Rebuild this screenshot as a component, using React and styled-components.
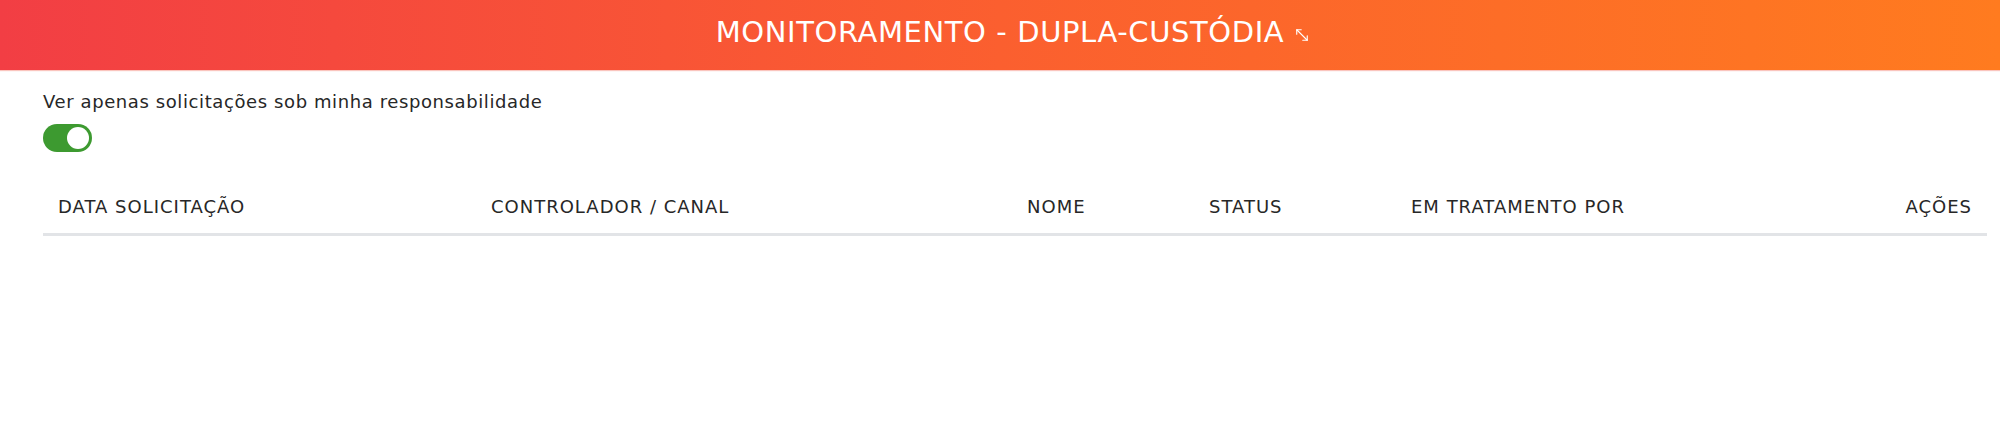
import React, { useState } from "react";
import styled, { createGlobalStyle } from "styled-components";
import { MoveDiagonal2 } from "lucide-react";

const GlobalStyle = createGlobalStyle`
  body {
    margin: 0;
    background: #fff;
    font-family: "DejaVu Sans", "Open Sans", sans-serif;
    color: #272727;
  }
`;

const Header = styled.header`
  display: grid;
  grid-template-columns: 1fr auto 1fr;
  align-items: center;
  height: 70px;
  background: linear-gradient(to right, #f23e44, #fb5f2f 50%, #ff7b1f);
  box-shadow: 0 1px 1px rgba(242, 90, 70, 0.35);
  color: #fff;
`;

const Title = styled.h1`
  grid-column: 2;
  margin: 0 0 6px;
  font-size: 29px;
  font-weight: 400;
  letter-spacing: 0.6px;
  white-space: nowrap;
`;

const ExpandButton = styled.button`
  grid-column: 3;
  justify-self: start;
  display: flex;
  align-items: center;
  margin: 0 0 0 9px;
  padding: 0;
  border: 0;
  background: none;
  color: #fff;
  cursor: pointer;
`;

const Content = styled.main`
  padding: 22px 13px 0 43px;
`;

const FilterLabel = styled.div`
  font-size: 18px;
  line-height: 20px;
  letter-spacing: 0.6px;
`;

const Switch = styled.button`
  display: flex;
  align-items: center;
  justify-content: ${(p) => (p.$on ? "flex-end" : "flex-start")};
  width: 49px;
  height: 28px;
  margin-top: 12px;
  padding: 0 3px;
  border: 0;
  border-radius: 14px;
  background: ${(p) => (p.$on ? "#3d9a30" : "#bdbdbd")};
  cursor: pointer;
`;

const Knob = styled.span`
  width: 22px;
  height: 22px;
  border-radius: 50%;
  background: #fff;
`;

const TableHead = styled.div`
  display: grid;
  grid-template-columns: 433px 536px 182px 202px 1fr auto;
  margin-top: 31px;
  border-bottom: 3px solid #e2e4e7;
`;

const HeadCell = styled.div`
  padding: 14px 15px 16px;
  font-size: 18px;
  line-height: 20px;
  letter-spacing: 1px;
  text-transform: uppercase;
  text-align: ${(p) => p.$align || "left"};
  white-space: nowrap;
`;

const columns = [
  { key: "data", label: "Data Solicitação" },
  { key: "controlador", label: "Controlador / Canal" },
  { key: "nome", label: "Nome" },
  { key: "status", label: "Status" },
  { key: "tratamento", label: "Em Tratamento Por" },
  { key: "acoes", label: "Ações", align: "right" },
];

export default function App() {
  const [onlyMine, setOnlyMine] = useState(true);

  return (
    <>
      <GlobalStyle />
      <Header>
        <Title>MONITORAMENTO - DUPLA-CUSTÓDIA</Title>
        <ExpandButton aria-label="expandir">
          <MoveDiagonal2 size={18} strokeWidth={1.5} />
        </ExpandButton>
      </Header>
      <Content>
        <FilterLabel>Ver apenas solicitações sob minha responsabilidade</FilterLabel>
        <Switch $on={onlyMine} onClick={() => setOnlyMine(!onlyMine)}>
          <Knob />
        </Switch>
        <TableHead>
          {columns.map((c) => (
            <HeadCell key={c.key} $align={c.align}>
              {c.label}
            </HeadCell>
          ))}
        </TableHead>
      </Content>
    </>
  );
}
